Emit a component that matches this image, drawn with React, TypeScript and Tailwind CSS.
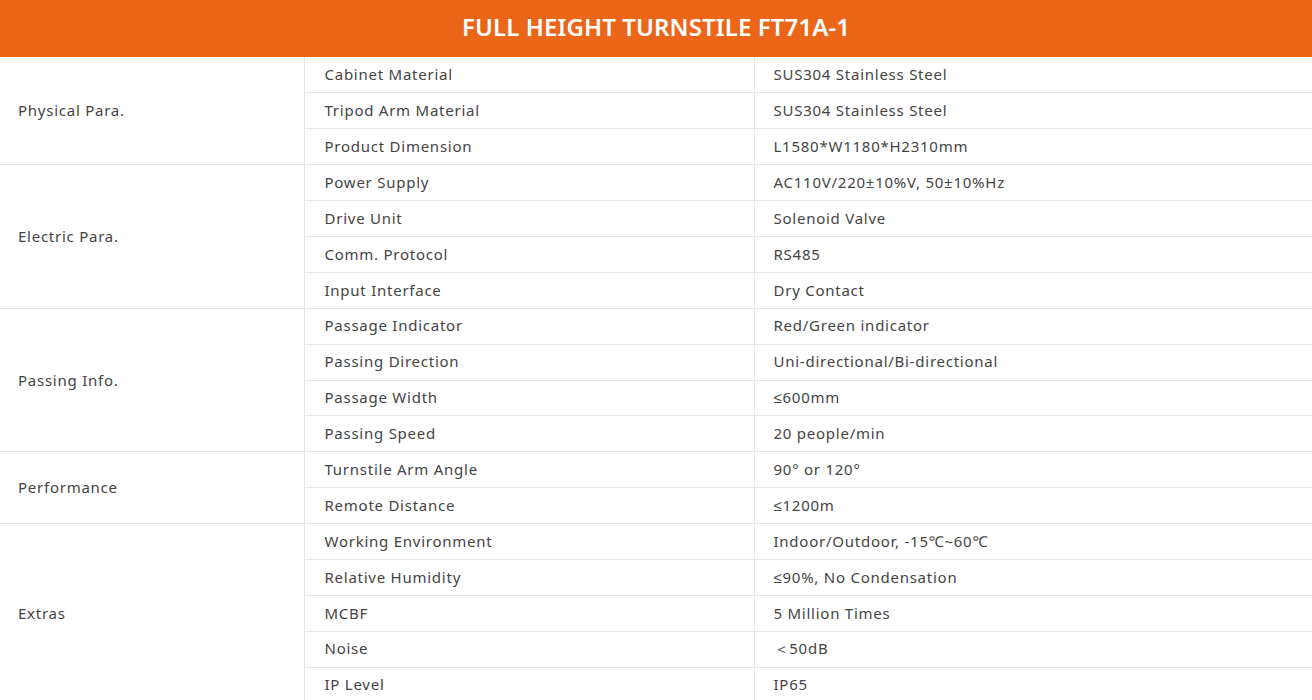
import React from 'react';

type Group = {
  name: string;
  rows: [string, string][];
};

const groups: Group[] = [
  {
    name: 'Physical Para.',
    rows: [
      ['Cabinet Material', 'SUS304 Stainless Steel'],
      ['Tripod Arm Material', 'SUS304 Stainless Steel'],
      ['Product Dimension', 'L1580*W1180*H2310mm'],
    ],
  },
  {
    name: 'Electric Para.',
    rows: [
      ['Power Supply', 'AC110V/220±10%V, 50±10%Hz'],
      ['Drive Unit', 'Solenoid Valve'],
      ['Comm. Protocol', 'RS485'],
      ['Input Interface', 'Dry Contact'],
    ],
  },
  {
    name: 'Passing Info.',
    rows: [
      ['Passage Indicator', 'Red/Green indicator'],
      ['Passing Direction', 'Uni-directional/Bi-directional'],
      ['Passage Width', '≤600mm'],
      ['Passing Speed', '20 people/min'],
    ],
  },
  {
    name: 'Performance',
    rows: [
      ['Turnstile Arm Angle', '90° or 120°'],
      ['Remote Distance', '≤1200m'],
    ],
  },
  {
    name: 'Extras',
    rows: [
      ['Working Environment', 'Indoor/Outdoor, -15℃~60℃'],
      ['Relative Humidity', '≤90%, No Condensation'],
      ['MCBF', '5 Million Times'],
      ['Noise', '＜50dB'],
      ['IP Level', 'IP65'],
    ],
  },
];

const App: React.FC = () => {
  return (
    <div className="min-h-screen bg-white font-['Noto_Sans',sans-serif] text-[#444]">
      <div className="flex h-[57px] items-center justify-center bg-[#ec661a] pb-[4px]">
        <h1 className="text-[24px] font-semibold tracking-[0.1px] text-white">FULL HEIGHT TURNSTILE FT71A-1</h1>
      </div>
      <table className="w-full border-collapse text-[15px] tracking-[0.75px]">
        <colgroup>
          <col className="w-[304px]" />
          <col className="w-[450px]" />
          <col />
        </colgroup>
        <tbody>
          {groups.map((group) =>
            group.rows.map(([label, value], i) => (
              <tr key={group.name + label} className="h-[35.9px]">
                {i === 0 && (
                  <td
                    rowSpan={group.rows.length}
                    className="border-r border-b border-[#e6e6e6] pl-[18px] align-middle"
                  >
                    {group.name}
                  </td>
                )}
                <td className="border-r border-b border-[#e6e6e6] pb-[1px] pl-5">{label}</td>
                <td className="border-b border-[#e6e6e6] pb-[1px] pl-[19px]">{value}</td>
              </tr>
            ))
          )}
        </tbody>
      </table>
    </div>
  );
};

export default App;
